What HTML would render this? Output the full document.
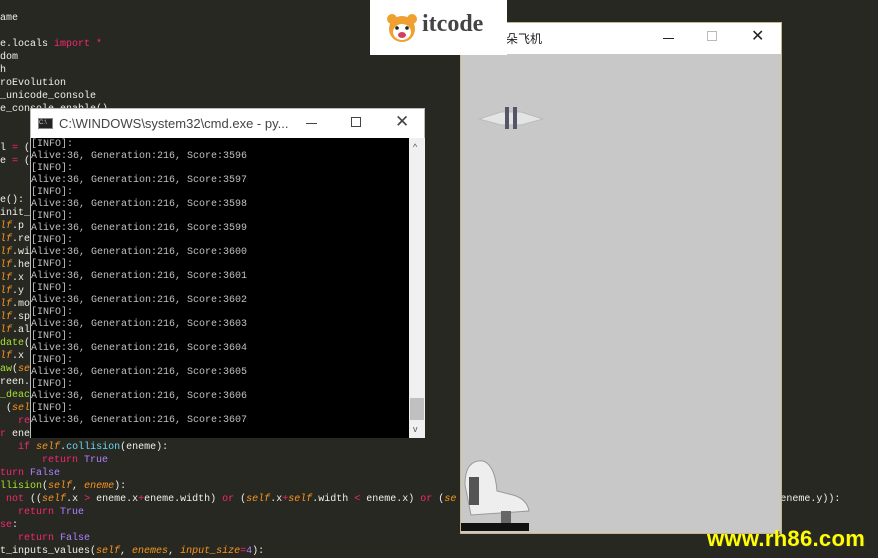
<!DOCTYPE html>
<html><head><meta charset="utf-8"><style>
*{margin:0;padding:0;box-sizing:border-box}
body{width:878px;height:557px;background:#272822;overflow:hidden;position:relative;font-family:"Liberation Sans",sans-serif}
#code{position:absolute;left:0;top:12px;font-family:"Liberation Mono",monospace;font-size:10px;line-height:13px;color:#f0f0ea;white-space:pre}
.k{color:#f92672}.s{color:#fd971f;font-style:italic}.p{color:#ae81ff}.g{color:#a6e22e}.b{color:#66d9ef}
#cmd{position:absolute;left:30px;top:108px;width:395px;height:330px;background:#fff;border:1px solid #bbb}
#cmd .tb{height:29px;position:relative;font-size:13px;color:#444}
#cmd .con{position:absolute;left:0;top:29px;width:378px;height:300px;background:#000;overflow:hidden;font-family:"Liberation Mono",monospace;font-size:10px;line-height:12px;color:#c0c0c0;white-space:pre;padding-top:1px}
#cmd .sb{position:absolute;left:378px;top:29px;width:16px;height:300px;background:#f0f0f0}
#game{position:absolute;left:460px;top:22px;width:322px;height:512px;background:#c8c8c8;border:1px solid #c8b68a}
#game .tb{height:31px;background:#fff;position:relative;font-size:12px;color:#222}
#logo{position:absolute;left:370px;top:0;width:137px;height:55px;background:#fff}
#wm{position:absolute;left:707px;top:526px;font-size:22px;font-weight:bold;color:#ffff00;letter-spacing:0.3px;text-shadow:1px 1px 0 #333}
</style></head><body>
<div id="code">ame

e.locals <span class="k">import</span> <span class="k">*</span>
dom
h
roEvolution
_unicode_console
e_console.enable()


l <span class="k">=</span> (2
e <span class="k">=</span> (


e():
init_
<span class="s">lf</span>.p
<span class="s">lf</span>.re
<span class="s">lf</span>.wi
<span class="s">lf</span>.he
<span class="s">lf</span>.x
<span class="s">lf</span>.y
<span class="s">lf</span>.mo
<span class="s">lf</span>.sp
<span class="s">lf</span>.al
<span class="g">date</span>(
<span class="s">lf</span>.x
<span class="g">aw</span>(<span class="s">se</span>
reen.
<span class="g">_deac</span>
 (<span class="s">sel</span>                                                                         idth):
   <span class="k">ret</span>
<span class="k">r</span> ene
   <span class="k">if</span> <span class="s">self</span>.<span class="b">collision</span>(eneme):
       <span class="k">return</span> <span class="p">True</span>
<span class="k">turn</span> <span class="p">False</span>
<span class="g">llision</span>(<span class="s">self</span>, <span class="s">eneme</span>):
 <span class="k">not</span> ((<span class="s">self</span>.x <span class="k">&gt;</span> eneme.x<span class="k">+</span>eneme.width) <span class="k">or</span> (<span class="s">self</span>.x<span class="k">+</span><span class="s">self</span>.width <span class="k">&lt;</span> eneme.x) <span class="k">or</span> (<span class="s">se</span>                                                      eneme.y)):
   <span class="k">return</span> <span class="p">True</span>
<span class="k">se</span>:
   <span class="k">return</span> <span class="p">False</span>
t_inputs_values(<span class="s">self</span>, <span class="s">enemes</span>, <span class="s">input_size</span><span class="k">=</span><span class="p">4</span>):</div>

<div id="cmd">
 <div class="tb">
  <div style="position:absolute;left:7px;top:9px;width:15px;height:11px;background:#222;border:1px solid #888;font-size:6px;color:#ccc;line-height:9px">C:\</div>
  <div style="position:absolute;left:28px;top:7px">C:\WINDOWS\system32\cmd.exe - py...</div>
  <div style="position:absolute;left:275px;top:14px;width:11px;height:1px;background:#444"></div>
  <div style="position:absolute;left:320px;top:8px;width:10px;height:10px;border:1px solid #444"></div>
  <div style="position:absolute;left:364px;top:3px;font-size:17px;color:#444">✕</div>
 </div>
 <div class="con">[INFO]:
Alive:36, Generation:216, Score:3596
[INFO]:
Alive:36, Generation:216, Score:3597
[INFO]:
Alive:36, Generation:216, Score:3598
[INFO]:
Alive:36, Generation:216, Score:3599
[INFO]:
Alive:36, Generation:216, Score:3600
[INFO]:
Alive:36, Generation:216, Score:3601
[INFO]:
Alive:36, Generation:216, Score:3602
[INFO]:
Alive:36, Generation:216, Score:3603
[INFO]:
Alive:36, Generation:216, Score:3604
[INFO]:
Alive:36, Generation:216, Score:3605
[INFO]:
Alive:36, Generation:216, Score:3606
[INFO]:
Alive:36, Generation:216, Score:3607</div>
 <div class="sb"><div style="position:absolute;left:4px;top:4px;font-size:9px;color:#555">^</div><div style="position:absolute;left:1px;top:260px;width:14px;height:22px;background:#c0c0c0"></div><div style="position:absolute;left:4px;top:286px;font-size:9px;color:#555">v</div></div>
</div>

<div id="game">
 <div class="tb">
  <div style="position:absolute;left:45px;top:7px;font-family:'Liberation Sans','Noto Sans CJK SC',sans-serif">朵飞机</div>
  <div style="position:absolute;left:202px;top:15px;width:11px;height:1px;background:#222"></div>
  <div style="position:absolute;left:246px;top:8px;width:10px;height:10px;border:1px solid #bbb"></div>
  <div style="position:absolute;left:290px;top:3px;font-size:16px;color:#222">✕</div>
 </div>
 <svg style="position:absolute;left:10px;top:72px" width="80" height="40"><polygon points="8,24 30,17 50,17 72,24 50,30 30,30" fill="#e4e4e4" stroke="#bbb"/><rect x="34" y="12" width="4" height="22" fill="#556"/><rect x="42" y="12" width="4" height="22" fill="#556"/></svg>
 <svg style="position:absolute;left:0;top:432px" width="70" height="78"><path d="M4,30 Q4,4 22,6 Q34,10 36,36 L52,40 Q66,44 68,56 L10,60 Z" fill="#eee" stroke="#999"/><rect x="8" y="22" width="10" height="28" fill="#555"/><rect x="40" y="56" width="10" height="12" fill="#666"/><rect x="0" y="68" width="68" height="8" fill="#111"/></svg>
</div>

<div id="logo">
 <svg style="position:absolute;left:16px;top:13px" width="32" height="30"><circle cx="6" cy="6" r="5" fill="#f0a030"/><circle cx="26" cy="6" r="5" fill="#f0a030"/><circle cx="16" cy="16" r="13" fill="#f0a030"/><ellipse cx="16" cy="19" rx="9" ry="8" fill="#fff"/><circle cx="11" cy="15" r="1.8" fill="#222"/><circle cx="21" cy="15" r="1.8" fill="#222"/><ellipse cx="16" cy="22" rx="4" ry="3" fill="#d04060"/></svg>
 <div style="position:absolute;left:52px;top:11px;font-family:'Liberation Serif',serif;font-weight:bold;font-size:24px;color:#444">itcode</div>
</div>
<div id="wm">www.rh86.com</div>
</body></html>
